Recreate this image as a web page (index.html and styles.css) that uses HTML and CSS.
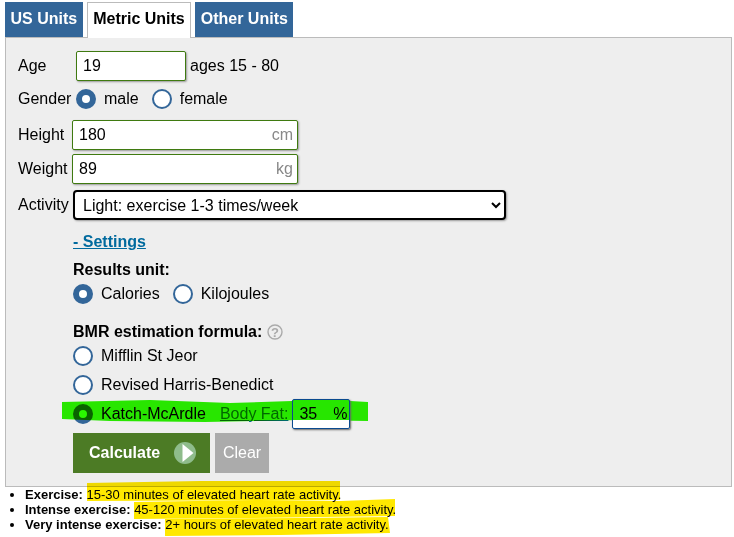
FILE: index.html
```html
<!DOCTYPE html>
<html lang="en">

<head>
    <meta charset="UTF-8">
    <title>Calorie Calculator</title>
    <link rel="stylesheet" href="styles.css">
</head>

<body>
    <div class="tabs">
        <a class="tab">US Units</a>
        <a class="tab active">Metric Units</a>
        <a class="tab">Other Units</a>
    </div>

    <form class="panel">
        <div class="row ageRow">
            <label class="label wide">Age</label>
            <input class="field ageField" type="text" value="19">
            <span class="hint">ages 15 - 80</span>
        </div>

        <div class="row genderRow">
            <label class="label wide">Gender</label>
            <span class="radio on"></span><span class="radioText">male</span>
            <span class="radio"></span><span class="radioText">female</span>
        </div>

        <div class="row heightRow">
            <label class="label narrow">Height</label>
            <div class="fieldBox">
                <input class="field longField" type="text" value="180">
                <span class="suffix">cm</span>
            </div>
        </div>

        <div class="row weightRow">
            <label class="label narrow">Weight</label>
            <div class="fieldBox">
                <input class="field longField" type="text" value="89">
                <span class="suffix">kg</span>
            </div>
        </div>

        <div class="row activityRow">
            <label class="label activityLabel">Activity</label>
            <select class="activity">
                <option>Light: exercise 1-3 times/week</option>
            </select>
        </div>

        <div class="settings">
            <a class="settingsLink">- Settings</a>

            <div class="heading resultsHeading">Results unit:</div>
            <div class="row unitRow">
                <span class="radio on"></span><span class="radioText">Calories</span>
                <span class="radio"></span><span class="radioText">Kilojoules</span>
            </div>

            <div class="heading bmrHeading">BMR estimation formula:
                <svg class="help" width="16" height="16" viewBox="0 0 16 16">
                    <circle cx="8" cy="8" r="7" fill="none" stroke="#aaa" stroke-width="1.4" />
                    <text x="8" y="12.5" text-anchor="middle" class="helpMark">?</text>
                </svg>
            </div>
            <div class="row formulaRow firstFormula">
                <span class="radio"></span><span class="radioText">Mifflin St Jeor</span>
            </div>
            <div class="row formulaRow">
                <span class="radio"></span><span class="radioText">Revised Harris-Benedict</span>
            </div>
            <div class="row formulaRow">
                <span class="radio on"></span><span class="radioText">Katch-McArdle</span>
                <a class="bodyFat">Body Fat:</a>
                <div class="fatBox">
                    <input class="fatField" type="text" value="35">
                    <span class="fatSuffix">%</span>
                </div>
            </div>

            <div class="buttons">
                <button class="calculate" type="button">Calculate
                    <svg class="playIcon" width="24" height="24" viewBox="0 0 24 24">
                        <circle cx="12" cy="12" r="11" fill="#8fbc8b" />
                        <path d="M9.5 3 L20.5 12 L9.5 21 Z" fill="#fff" />
                    </svg>
                </button>
                <button class="clear" type="button">Clear</button>
            </div>
        </div>
    </form>

    <ul class="notes">
        <li><b>Exercise:</b> 15-30 minutes of elevated heart rate activity.</li>
        <li><b>Intense exercise:</b> 45-120 minutes of elevated heart rate activity.</li>
        <li><b>Very intense exercise:</b> 2+ hours of elevated heart rate activity.</li>
    </ul>

    <!-- marker strokes drawn on top of the page -->
    <svg class="marker" width="734" height="537" viewBox="0 0 734 537">
        <path fill="#2af700" d="M62 402 L150 400 L230 403 L292 401 L350 401 L368 402 L368 421 L300 420 L205 422 L110 421 L62 419 Z" />
        <path fill="#ffe800" d="M87 483 L200 481 L340 481 L340 500 L87 501 Z" />
        <path fill="#ffe800" d="M134 502 L260 500 L340 501 L395 499 L395 516 L250 518 L134 519 Z" />
        <path fill="#ffe800" d="M165 519 L300 518 L388 517 L390 533 L280 535 L165 536 Z" />
    </svg>
</body>

</html>
```

FILE: styles.css
```css
body {
    margin: 0;
    font-family: "Liberation Sans", Arial, sans-serif;
    font-size: 16px;
    color: #000;
    background: #fff;
}

.tabs {
    display: flex;
    gap: 4px;
    height: 36px;
    padding: 2px 0 0 5px;
    box-sizing: border-box;
    position: relative;
    z-index: 1;
}

.tab {
    height: 35px;
    padding: 0 5.5px;
    line-height: 34px;
    font-size: 16px;
    font-weight: bold;
    color: #fff;
    background: #336699;
}

.tab.active {
    height: 36px;
    color: #000;
    border: 1px solid #bbb;
    border-bottom: 0;
    box-sizing: border-box;
    line-height: 32px;
    background: #fff;
}

.panel {
    width: 727px;
    height: 450px;
    margin: 1px 0 0 5px;
    padding: 13px 0 0 12px;
    box-sizing: border-box;
    background: #eee;
    border: 1px solid #bbb;
}

.row {
    display: flex;
    align-items: center;
}

.label.wide {
    width: 58px;
}

.label.narrow {
    width: 54px;
}

.activityLabel {
    width: 55px;
}

.field {
    height: 30px;
    box-sizing: border-box;
    padding: 0 6px;
    font: inherit;
    color: #000;
    background: #fff;
    border: 1px solid #3f7a10;
    border-radius: 2px;
    box-shadow: 1px 1px 2px #999;
    outline: none;
}

.ageField {
    width: 110px;
}

.hint {
    margin-left: 4px;
}

.genderRow {
    margin-top: 7px;
    height: 22px;
}

.radio {
    width: 20px;
    height: 20px;
    box-sizing: border-box;
    flex: none;
    border: 2px solid #336699;
    border-radius: 50%;
    background: #fff;
}

.radio.on {
    border: 6px solid #336699;
}

.radioText {
    margin: 0 13px 0 8px;
}

.heightRow {
    margin-top: 10px;
}

.weightRow {
    margin-top: 4px;
}

.fieldBox {
    position: relative;
}

.longField {
    width: 226px;
    height: 30px;
}

.suffix {
    position: absolute;
    right: 5px;
    top: 6px;
    color: #888;
}

.activityRow {
    margin-top: 6px;
}

.activity {
    width: 433px;
    height: 30px;
    box-sizing: border-box;
    padding: 0 4px;
    font: inherit;
    background: #fff;
    border: 2px solid #000;
    border-radius: 4px;
    box-shadow: 1px 1px 2px #999;
    outline: none;
}

.settings {
    padding: 12px 0 0 55px;
}

.settingsLink {
    display: block;
    height: 20px;
    line-height: 20px;
    font-weight: bold;
    color: #006a9e;
    text-decoration: underline;
}

.heading {
    font-weight: bold;
    height: 20px;
    line-height: 20px;
    display: flex;
    align-items: center;
}

.resultsHeading {
    margin-top: 8px;
}

.unitRow {
    margin-top: 2px;
    height: 24px;
}

.bmrHeading {
    margin-top: 16px;
}

.help {
    margin-left: 5px;
}

.helpMark {
    font-size: 13px;
    fill: #aaa;
}

.formulaRow {
    height: 24px;
    margin-top: 5px;
}

.formulaRow.firstFormula {
    margin-top: 2px;
}

.bodyFat {
    margin-left: 1px;
    color: #006a9e;
    text-decoration: underline;
}

.fatBox {
    position: relative;
    margin-left: 4px;
    z-index: 3;
}

.fatField {
    display: block;
    width: 58px;
    height: 30px;
    padding: 0 6px;
    box-sizing: border-box;
    font: inherit;
    border: 1px solid #0a4a8f;
    border-radius: 2px;
    box-shadow: 1px 1px 2px #666;
    background: linear-gradient(#27e600, #27e600 20px, #fff 20px);
    outline: none;
}

.fatSuffix {
    position: absolute;
    right: 3px;
    top: 6px;
}

.buttons {
    display: flex;
    gap: 5px;
    margin-top: 7px;
}

.calculate {
    display: flex;
    align-items: center;
    gap: 13px;
    width: 137px;
    height: 40px;
    padding: 0 0 0 16px;
    border: 0;
    font: bold 16px "Liberation Sans", Arial, sans-serif;
    color: #fff;
    background: #4c7b25;
}

.clear {
    width: 54px;
    height: 40px;
    padding: 0;
    border: 0;
    font: 16px "Liberation Sans", Arial, sans-serif;
    color: #fff;
    background: #ababab;
}

.notes {
    margin: 0;
    padding: 0 0 0 25px;
    font-size: 13px;
    line-height: 15px;
    position: relative;
    z-index: 3;
}

.notes li {
    height: 15px;
}

.marker {
    position: absolute;
    left: 0;
    top: 0;
    z-index: 2;
    mix-blend-mode: multiply;
    pointer-events: none;
}
```
